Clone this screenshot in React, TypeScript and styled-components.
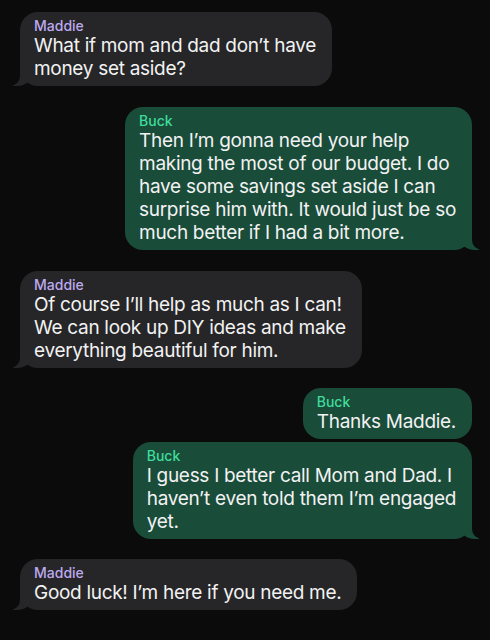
import styled, { createGlobalStyle } from 'styled-components';

const GlobalStyle = createGlobalStyle`
  html, body {
    margin: 0;
    padding: 0;
    background: #0b0b0b;
  }
  body {
    font-family: Inter, "Liberation Sans", Arial, sans-serif;
    -webkit-font-smoothing: antialiased;
  }
`;

const PAGE_BG = '#0b0b0b';

const Thread = styled.div`
  width: 490px;
  height: 640px;
  box-sizing: border-box;
  padding: 12px 18px 0 20px;
  display: flex;
  flex-direction: column;
  background: ${PAGE_BG};
  overflow: hidden;
`;

const Row = styled.div<{ $mine: boolean; $gap: number }>`
  display: flex;
  justify-content: ${(p) => (p.$mine ? 'flex-end' : 'flex-start')};
  margin-top: ${(p) => p.$gap}px;
`;

const Bubble = styled.div<{ $mine: boolean; $tail: boolean }>`
  position: relative;
  box-sizing: border-box;
  padding: 5px 16px 6px 14px;
  border-radius: 18px;
  background: ${(p) => (p.$mine ? '#1a4c3a' : '#262628')};
  color: #f2f2f2;

  ${(p) =>
    p.$tail &&
    (p.$mine
      ? `
    &::before {
      content: '';
      position: absolute;
      bottom: 0;
      right: -7px;
      width: 20px;
      height: 18px;
      background: #1a4c3a;
      border-bottom-left-radius: 16px 14px;
    }
    &::after {
      content: '';
      position: absolute;
      bottom: 0;
      right: -10px;
      width: 10px;
      height: 18px;
      background: ${PAGE_BG};
      border-bottom-left-radius: 10px;
    }
  `
      : `
    &::before {
      content: '';
      position: absolute;
      bottom: 0;
      left: -7px;
      width: 20px;
      height: 18px;
      background: #262628;
      border-bottom-right-radius: 16px 14px;
    }
    &::after {
      content: '';
      position: absolute;
      bottom: 0;
      left: -10px;
      width: 10px;
      height: 18px;
      background: ${PAGE_BG};
      border-bottom-right-radius: 10px;
    }
  `)}
`;

const Sender = styled.div<{ $mine: boolean }>`
  position: relative;
  z-index: 1;
  font-size: 14px;
  line-height: 17px;
  font-weight: 500;
  color: ${(p) => (p.$mine ? '#3fdc9a' : '#bda9ee')};
`;

const Body = styled.div`
  position: relative;
  z-index: 1;
  font-size: 19px;
  line-height: 23px;
  letter-spacing: -0.3px;
  white-space: nowrap;
`;

const Line = styled.span`
  display: block;
`;

type Msg = { mine: boolean; lines: string[]; gap: number; tail: boolean };

const messages: Msg[] = [
  {
    mine: false,
    gap: 0,
    tail: true,
    lines: ['What if mom and dad don’t have', 'money set aside?'],
  },
  {
    mine: true,
    gap: 21,
    tail: true,
    lines: [
      'Then I’m gonna need your help',
      'making the most of our budget. I do',
      'have some savings set aside I can',
      'surprise him with. It would just be so',
      'much better if I had a bit more.',
    ],
  },
  {
    mine: false,
    gap: 21,
    tail: true,
    lines: [
      'Of course I’ll help as much as I can!',
      'We can look up DIY ideas and make',
      'everything beautiful for him.',
    ],
  },
  { mine: true, gap: 20, tail: false, lines: ['Thanks Maddie.'] },
  {
    mine: true,
    gap: 3,
    tail: true,
    lines: [
      'I guess I better call Mom and Dad. I',
      'haven’t even told them I’m engaged',
      'yet.',
    ],
  },
  { mine: false, gap: 20, tail: true, lines: ['Good luck! I’m here if you need me.'] },
];

export default function App() {
  return (
    <>
      <GlobalStyle />
      <Thread>
        {messages.map((m, i) => (
          <Row key={'msg' + i} $mine={m.mine} $gap={m.gap}>
            <Bubble $mine={m.mine} $tail={m.tail}>
              <Sender $mine={m.mine}>{m.mine ? 'Buck' : 'Maddie'}</Sender>
              <Body>
                {m.lines.map((l, j) => (
                  <Line key={j}>{l}</Line>
                ))}
              </Body>
            </Bubble>
          </Row>
        ))}
      </Thread>
    </>
  );
}
